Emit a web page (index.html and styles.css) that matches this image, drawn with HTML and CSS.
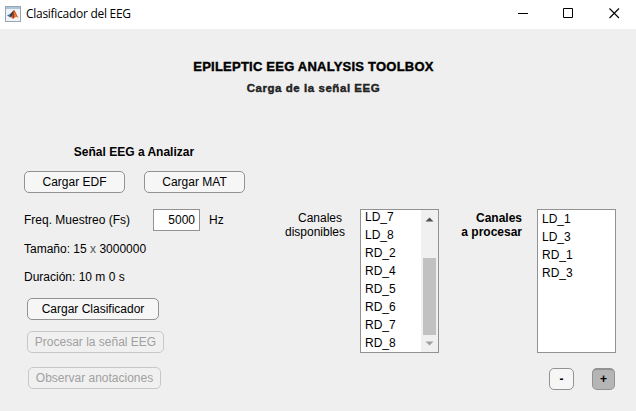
FILE: index.html
```html
<!DOCTYPE html>
<html lang="es">
<head>
<meta charset="utf-8">
<title>Clasificador del EEG</title>
<link rel="stylesheet" href="styles.css">
</head>
<body>
<header class="titlebar">
  <svg class="app-icon" width="16" height="16" viewBox="0 0 16 16">
    <rect x=".5" y=".5" width="15" height="15" fill="#f1f3f5" stroke="#98a6b4"/>
    <path d="M1 1h14v2H1z" fill="#a9c4dc"/>
    <path d="M2 9.300l3.500-1.300L9 4.500 7.500 10 5 11.500z" fill="#3d7398"/>
    <path d="M5 8.200L9 4l-.5 5L6 11.700z" fill="#263b54"/>
    <path d="M9 3.800c1.500 1.600 2.500 5.200 4.500 8L11 10.500 8 13l-2-2.200C8 9.500 8 6 9 3.800z" fill="#d9531e"/>
    <path d="M9 4.200l.4 5.800L8 12.500z" fill="#8e2413"/>
    <path d="M9.500 5.500l1.300 4.500-1.300 1z" fill="#f3a13a"/>
  </svg>
  <h1 class="app-name">Clasificador del EEG</h1>
  <svg class="window-controls" width="104" height="12" viewBox="0 0 104 12" fill="none" stroke="#000">
    <path d="M0 5.500h10" stroke-width="1"/>
    <path d="M45.500.500h9v9h-9z"/>
    <path d="M91.500.500l9.500 9.500M101 .500L91.500 10" stroke-width="1.100"/>
  </svg>
</header>
<div class="heading">
  <h2 class="title">EPILEPTIC EEG ANALYSIS TOOLBOX</h2>
  <p class="subtitle">Carga de la señal EEG</p>
</div>
<main class="content">
  <section class="signal">
    <h3 class="section-title">Señal EEG a Analizar</h3>
    <div class="load-row">
      <button class="btn">Cargar EDF</button>
      <button class="btn">Cargar MAT</button>
    </div>
    <div class="field">
      <label class="field-label" for="fs">Freq. Muestreo (Fs)</label>
      <input class="field-input" id="fs" value="5000">
      <span>Hz</span>
    </div>
    <p class="info">Tamaño: 15 <span class="times">x</span> 3000000</p>
    <p class="info">Duración: 10 m 0 s</p>
    <div class="actions">
      <button class="btn classifier">Cargar Clasificador</button>
      <button class="btn process" disabled>Procesar la señal EEG</button>
      <button class="btn notes" disabled>Observar anotaciones</button>
    </div>
  </section>
  <section class="channels">
    <p class="channel-label available"><span class="first-line">Canales</span><br>disponibles</p>
    <div class="listbox scrolled">
      <ul class="items">
        <li>LD_7</li><li>LD_8</li><li>RD_2</li><li>RD_4</li><li>RD_5</li><li>RD_6</li><li>RD_7</li><li>RD_8</li>
      </ul>
      <div class="scrollbar">
        <svg width="9" height="5" viewBox="0 0 9 5"><path d="M0.500 4.500h8l-4-4z" fill="#505050"/></svg>
        <div class="thumb"></div>
        <svg width="9" height="5" viewBox="0 0 9 5"><path d="M0.500.500h8l-4 4z" fill="#a0a0a0"/></svg>
      </div>
    </div>
  </section>
  <section class="selection">
    <div class="channels">
      <p class="channel-label selected">Canales<br>a procesar</p>
      <div class="listbox">
        <ul class="items">
          <li>LD_1</li><li>LD_3</li><li>RD_1</li><li>RD_3</li>
        </ul>
      </div>
    </div>
    <div class="edit-row">
      <button class="btn remove">-</button>
      <button class="btn add">+</button>
    </div>
  </section>
</main>
</body>
</html>
```

FILE: styles.css
```css
* { box-sizing: border-box; }

body {
  margin: 0;
  height: 411px;
  overflow: hidden;
  background: #efefef;
  color: #000;
  font: 12px/14px "Liberation Sans", Arial, sans-serif;
}

h1, h2, h3, p, ul { margin: 0; padding: 0; }
ul { list-style: none; }

.titlebar {
  display: flex;
  align-items: center;
  height: 29px;
  padding: 0 14px 2px 5px;
  background: #fff;
}
.app-name {
  margin-left: 5px;
  font: 12px/16px "Open Sans", "Noto Sans", sans-serif;
  letter-spacing: -0.28px;
}
.window-controls { margin-left: auto; }

.heading {
  height: 116px;
  padding: 30px 9px 0 0;
  text-align: center;
}
.title {
  font-size: 13px;
  line-height: 16px;
  letter-spacing: 0.23px;
  -webkit-text-stroke: 0.4px #000;
}
.subtitle {
  margin-top: 6px;
  color: #222;
  font-size: 11.500px;
  font-weight: bold;
  line-height: 14px;
  letter-spacing: 0.55px;
  -webkit-text-stroke: 0.4px #222;
}

.content { display: flex; align-items: flex-start; }

.signal { width: 221px; margin-left: 24px; }
.section-title {
  padding-right: 1px;
  font-size: 12px;
  line-height: 14px;
  text-align: center;
}
.load-row { display: flex; gap: 19px; margin-top: 12px; }
.btn {
  width: 101px;
  height: 22px;
  padding: 0;
  border: 1px solid #929292;
  border-radius: 5px;
  background: #f6f6f6;
  color: #000;
  font: 12px/18px "Liberation Sans", Arial, sans-serif;
}
.btn:disabled { border-color: #c8c8c8; background: #f0f0f0; color: #a0a0a0; }

.field { display: flex; align-items: center; height: 22px; margin-top: 16px; }
.field-label { width: 129px; }
.field-input {
  width: 47px;
  height: 22px;
  margin-right: 9px;
  padding: 0 4px;
  border: 1px solid #929292;
  font: 12px "Liberation Sans", Arial, sans-serif;
  text-align: right;
}
.info { margin-top: 11px; line-height: 17px; }
.field + .info { margin-top: 10px; }
.times { color: #555; }
.actions {
  display: flex;
  flex-direction: column;
  margin-top: 12px;
  padding-left: 3px;
}
.classifier { width: 132px; }
.process { width: 137px; margin-top: 11px; }
.notes { width: 133px; margin: 14px 0 0 1px; }

.channels { display: flex; }
.content > .channels { margin: 64px 0 0 35px; }
.channel-label { padding-top: 2px; text-align: right; }
.available { width: 65px; margin-right: 15px; }
.first-line { margin-right: 3px; }
.selected { width: 62px; margin-right: 15px; font-weight: bold; }

.listbox {
  display: flex;
  width: 79px;
  height: 144px;
  overflow: hidden;
  border: 1px solid #929292;
  background: #fff;
}
.items { flex: 1; padding-left: 4px; line-height: 18px; }
.scrolled .items { margin-top: -2px; }
.scrollbar {
  display: flex;
  flex-direction: column;
  align-items: center;
  width: 17px;
  padding: 7px 0 6px;
  background: #f0f0f0;
}
.thumb { width: 13px; height: 77px; margin: 36px 0 auto; background: #c1c1c1; }

.selection { margin: 64px 0 0 21px; }
.edit-row { display: flex; justify-content: flex-end; gap: 18px; margin: 15px 1px 0 0; }
.remove { width: 25px; font-weight: bold; }
.add {
  width: 23px;
  padding-bottom: 2px;
  border-top-width: 2px;
  background: #b5b5b5;
  font-weight: bold;
}
```
